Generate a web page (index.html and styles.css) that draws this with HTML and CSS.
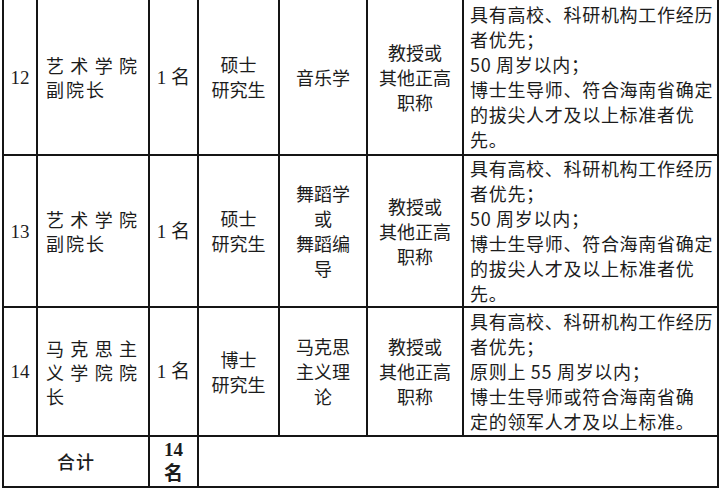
FILE: index.html
```html
<!DOCTYPE html>
<html lang="zh-CN">
<head>
<meta charset="utf-8">
<link rel="stylesheet" href="styles.css">
</head>
<body>
<table class="grid">
  <colgroup>
    <col class="c-no">
    <col class="c-pos">
    <col class="c-num">
    <col class="c-edu">
    <col class="c-major">
    <col class="c-title">
    <col class="c-req">
  </colgroup>
  <tbody>
    <tr class="r-first">
      <td class="no">12</td>
      <td class="pos">艺术学院副院长</td>
      <td class="num">1 名</td>
      <td class="ctr">硕士<br>研究生</td>
      <td class="ctr">音乐学</td>
      <td class="ctr">教授或<br>其他正高<br>职称</td>
      <td class="req">具有高校、科研机构工作经历<br>者优先；<br>50 周岁以内；<br>博士生导师、符合海南省确定<br>的拔尖人才及以上标准者优<br>先。</td>
    </tr>
    <tr class="r-mid">
      <td class="no">13</td>
      <td class="pos">艺术学院副院长</td>
      <td class="num">1 名</td>
      <td class="ctr">硕士<br>研究生</td>
      <td class="ctr">舞蹈学<br>或<br>舞蹈编<br>导</td>
      <td class="ctr">教授或<br>其他正高<br>职称</td>
      <td class="req">具有高校、科研机构工作经历<br>者优先；<br>50 周岁以内；<br>博士生导师、符合海南省确定<br>的拔尖人才及以上标准者优<br>先。</td>
    </tr>
    <tr class="r-last">
      <td class="no">14</td>
      <td class="pos">马克思主义学院院长</td>
      <td class="num">1 名</td>
      <td class="ctr">博士<br>研究生</td>
      <td class="ctr">马克思<br>主义理<br>论</td>
      <td class="ctr">教授或<br>其他正高<br>职称</td>
      <td class="req">具有高校、科研机构工作经历<br>者优先；<br>原则上 55 周岁以内；<br>博士生导师或符合海南省确<br>定的领军人才及以上标准。</td>
    </tr>
    <tr class="r-total">
      <td class="total" colspan="2">合计</td>
      <td class="num sum">14<br>名</td>
      <td colspan="4"></td>
    </tr>
  </tbody>
</table>
</body>
</html>
```

FILE: styles.css
```css
html, body {
  margin: 0;
  padding: 0;
  background: #ffffff;
}

body {
  font-family: "Noto Sans CJK SC", "Noto Sans", sans-serif;
  color: #1c1c1c;
}

.grid {
  border-collapse: collapse;
  table-layout: fixed;
  margin-left: 2px;
  width: 717px;
  font-size: 18px;
  line-height: 25px;
}

.c-no { width: 34px; }
.c-pos { width: 112px; }
.c-num { width: 49px; }
.c-edu { width: 81px; }
.c-major { width: 88px; }
.c-title { width: 96px; }
.c-req { width: 255px; }

.grid td {
  border: 2px solid #151515;
  padding: 0;
  vertical-align: middle;
  text-align: center;
}

.grid .r-first td {
  border-top: none;
  height: 154px;
}

.grid .r-mid td { height: 150px; }
.grid .r-last td { height: 127px; }
.grid .r-total td { height: 49px; }

.grid .no {
  font-family: "Liberation Serif", "Noto Sans CJK SC", serif;
  font-size: 19px;
}

.grid .pos {
  text-align: justify;
  text-align-last: left;
  text-justify: inter-character;
  letter-spacing: 2px;
  padding: 0 9px 0 8px;
  line-height: 24px;
}

.grid .num {
  font-family: "Liberation Serif", "Noto Sans CJK SC", serif;
  font-size: 19px;
}

.grid .ctr {
  line-height: 25px;
}

.grid .req {
  text-align: left;
  white-space: nowrap;
  letter-spacing: 0.7px;
  padding: 0 0 0 6px;
}

.grid .total {
  font-weight: 500;
  letter-spacing: 1px;
}

.grid .sum {
  font-weight: 700;
  line-height: 24px;
}
```
